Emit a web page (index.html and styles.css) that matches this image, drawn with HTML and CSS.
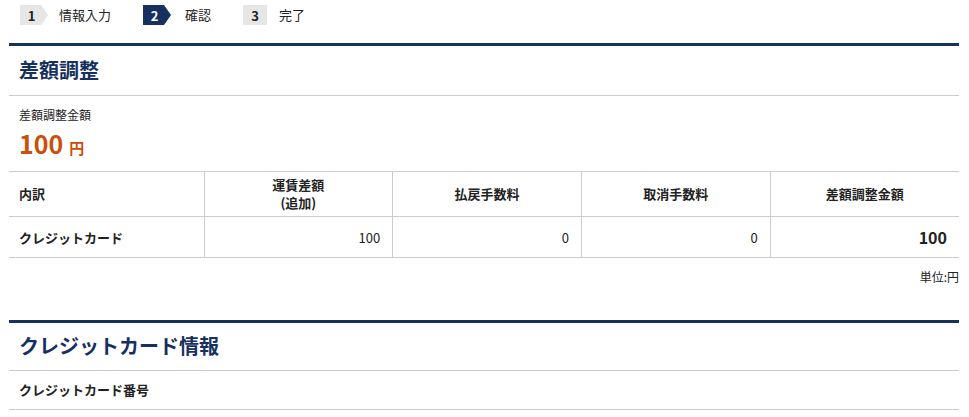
FILE: index.html
```html
<!DOCTYPE html>
<html lang="ja">
<head>
<meta charset="utf-8">
<link rel="stylesheet" href="styles.css">
</head>
<body>
<div class="page">
  <ol class="steps">
    <li class="step"><span class="num arrow">1</span><span class="label">情報入力</span></li>
    <li class="step current"><span class="num arrow">2</span><span class="label">確認</span></li>
    <li class="step"><span class="num">3</span><span class="label">完了</span></li>
  </ol>

  <section class="section first">
    <h2 class="section-title">差額調整</h2>
    <div class="amount-block">
      <div class="amount-label">差額調整金額</div>
      <div class="amount"><span class="amount-num">100</span><span class="amount-unit">円</span></div>
    </div>
    <table class="detail">
      <thead>
        <tr>
          <th class="col-first">内訳</th>
          <th>運賃差額<br>(追加)</th>
          <th>払戻手数料</th>
          <th>取消手数料</th>
          <th>差額調整金額</th>
        </tr>
      </thead>
      <tbody>
        <tr>
          <td class="col-first">クレジットカード</td>
          <td class="num-cell">100</td>
          <td class="num-cell">0</td>
          <td class="num-cell">0</td>
          <td class="num-cell total">100</td>
        </tr>
      </tbody>
    </table>
    <div class="unit-note">単位:円</div>
  </section>

  <section class="section second">
    <h2 class="section-title">クレジットカード情報</h2>
    <div class="field-row">クレジットカード番号</div>
  </section>
</div>
</body>
</html>
```
FILE: styles.css
```css
html, body {
  margin: 0;
  padding: 0;
  background: #fff;
}
body {
  font-family: "Noto Sans CJK JP", "Noto Sans", sans-serif;
  color: #222;
}
.page {
  width: 950px;
  margin-left: 9px;
}
.steps {
  list-style: none;
  margin: 0;
  padding: 5px 0 0 11px;
  height: 43px;
  box-sizing: border-box;
  display: flex;
  align-items: flex-start;
}
.step {
  display: flex;
  align-items: center;
  margin-right: 32px;
}
.num {
  position: relative;
  display: flex;
  align-items: center;
  justify-content: center;
  width: 24px;
  height: 20px;
  background: #e6e6e6;
  color: #222;
  font-size: 13px;
  font-weight: bold;
  box-sizing: border-box;
}
.num.arrow {
  width: 21px;
  margin-right: 7px;
  padding-left: 2px;
}
.num.arrow::after {
  content: "";
  position: absolute;
  left: 21px;
  top: 0;
  border-top: 10px solid transparent;
  border-bottom: 10px solid transparent;
  border-left: 7px solid #e6e6e6;
}
.step.current .num {
  background: #16305f;
  color: #fff;
}
.step.current .num.arrow::after {
  border-left-color: #16305f;
}
.label {
  margin-left: 11px;
  font-size: 13px;
  line-height: 20px;
  color: #222;
}
.step.current .label {
  margin-left: 14px;
}
.step:last-child .label {
  margin-left: 12px;
}
.section {
  border-top: 3px solid #16305f;
}
.section-title {
  margin: 0;
  padding: 0 10px;
  height: 49px;
  line-height: 48px;
  font-size: 20px;
  font-weight: bold;
  color: #16305f;
  border-bottom: 1px solid #cccccc;
}
.amount-block {
  padding: 9px 10px 0;
  height: 75px;
  box-sizing: border-box;
}
.amount-label {
  font-size: 12px;
  line-height: 20px;
}
.amount {
  color: #c8500a;
  font-weight: bold;
  line-height: 30px;
  margin-top: 3px;
}
.amount-num {
  font-size: 25px;
}
.amount-unit {
  font-size: 15px;
  margin-left: 6px;
}
.detail {
  width: 100%;
  border-collapse: collapse;
  table-layout: fixed;
  font-size: 13px;
}
.detail th, .detail td {
  border-top: 1px solid #cccccc;
  border-bottom: 1px solid #cccccc;
  border-left: 1px solid #cccccc;
  padding: 0 12px;
}
.detail th:first-child, .detail td:first-child {
  border-left: none;
}
.detail th {
  height: 44px;
  font-weight: bold;
  text-align: center;
  line-height: 18px;
}
.detail td {
  height: 40px;
}
.detail .col-first {
  width: 195px;
  box-sizing: border-box;
  text-align: left;
  padding-left: 10px;
  font-weight: bold;
}
.num-cell {
  text-align: right;
}
.num-cell.total {
  font-size: 16px;
  font-weight: bold;
}
.unit-note {
  text-align: right;
  font-size: 12px;
  line-height: 20px;
  padding-top: 9px;
  height: 62px;
  box-sizing: border-box;
}
.second .section-title {
  height: 47px;
  line-height: 46px;
}
.field-row {
  padding: 0 10px;
  height: 38px;
  line-height: 38px;
  font-size: 13px;
  font-weight: bold;
  border-bottom: 1px solid #cccccc;
}
```
